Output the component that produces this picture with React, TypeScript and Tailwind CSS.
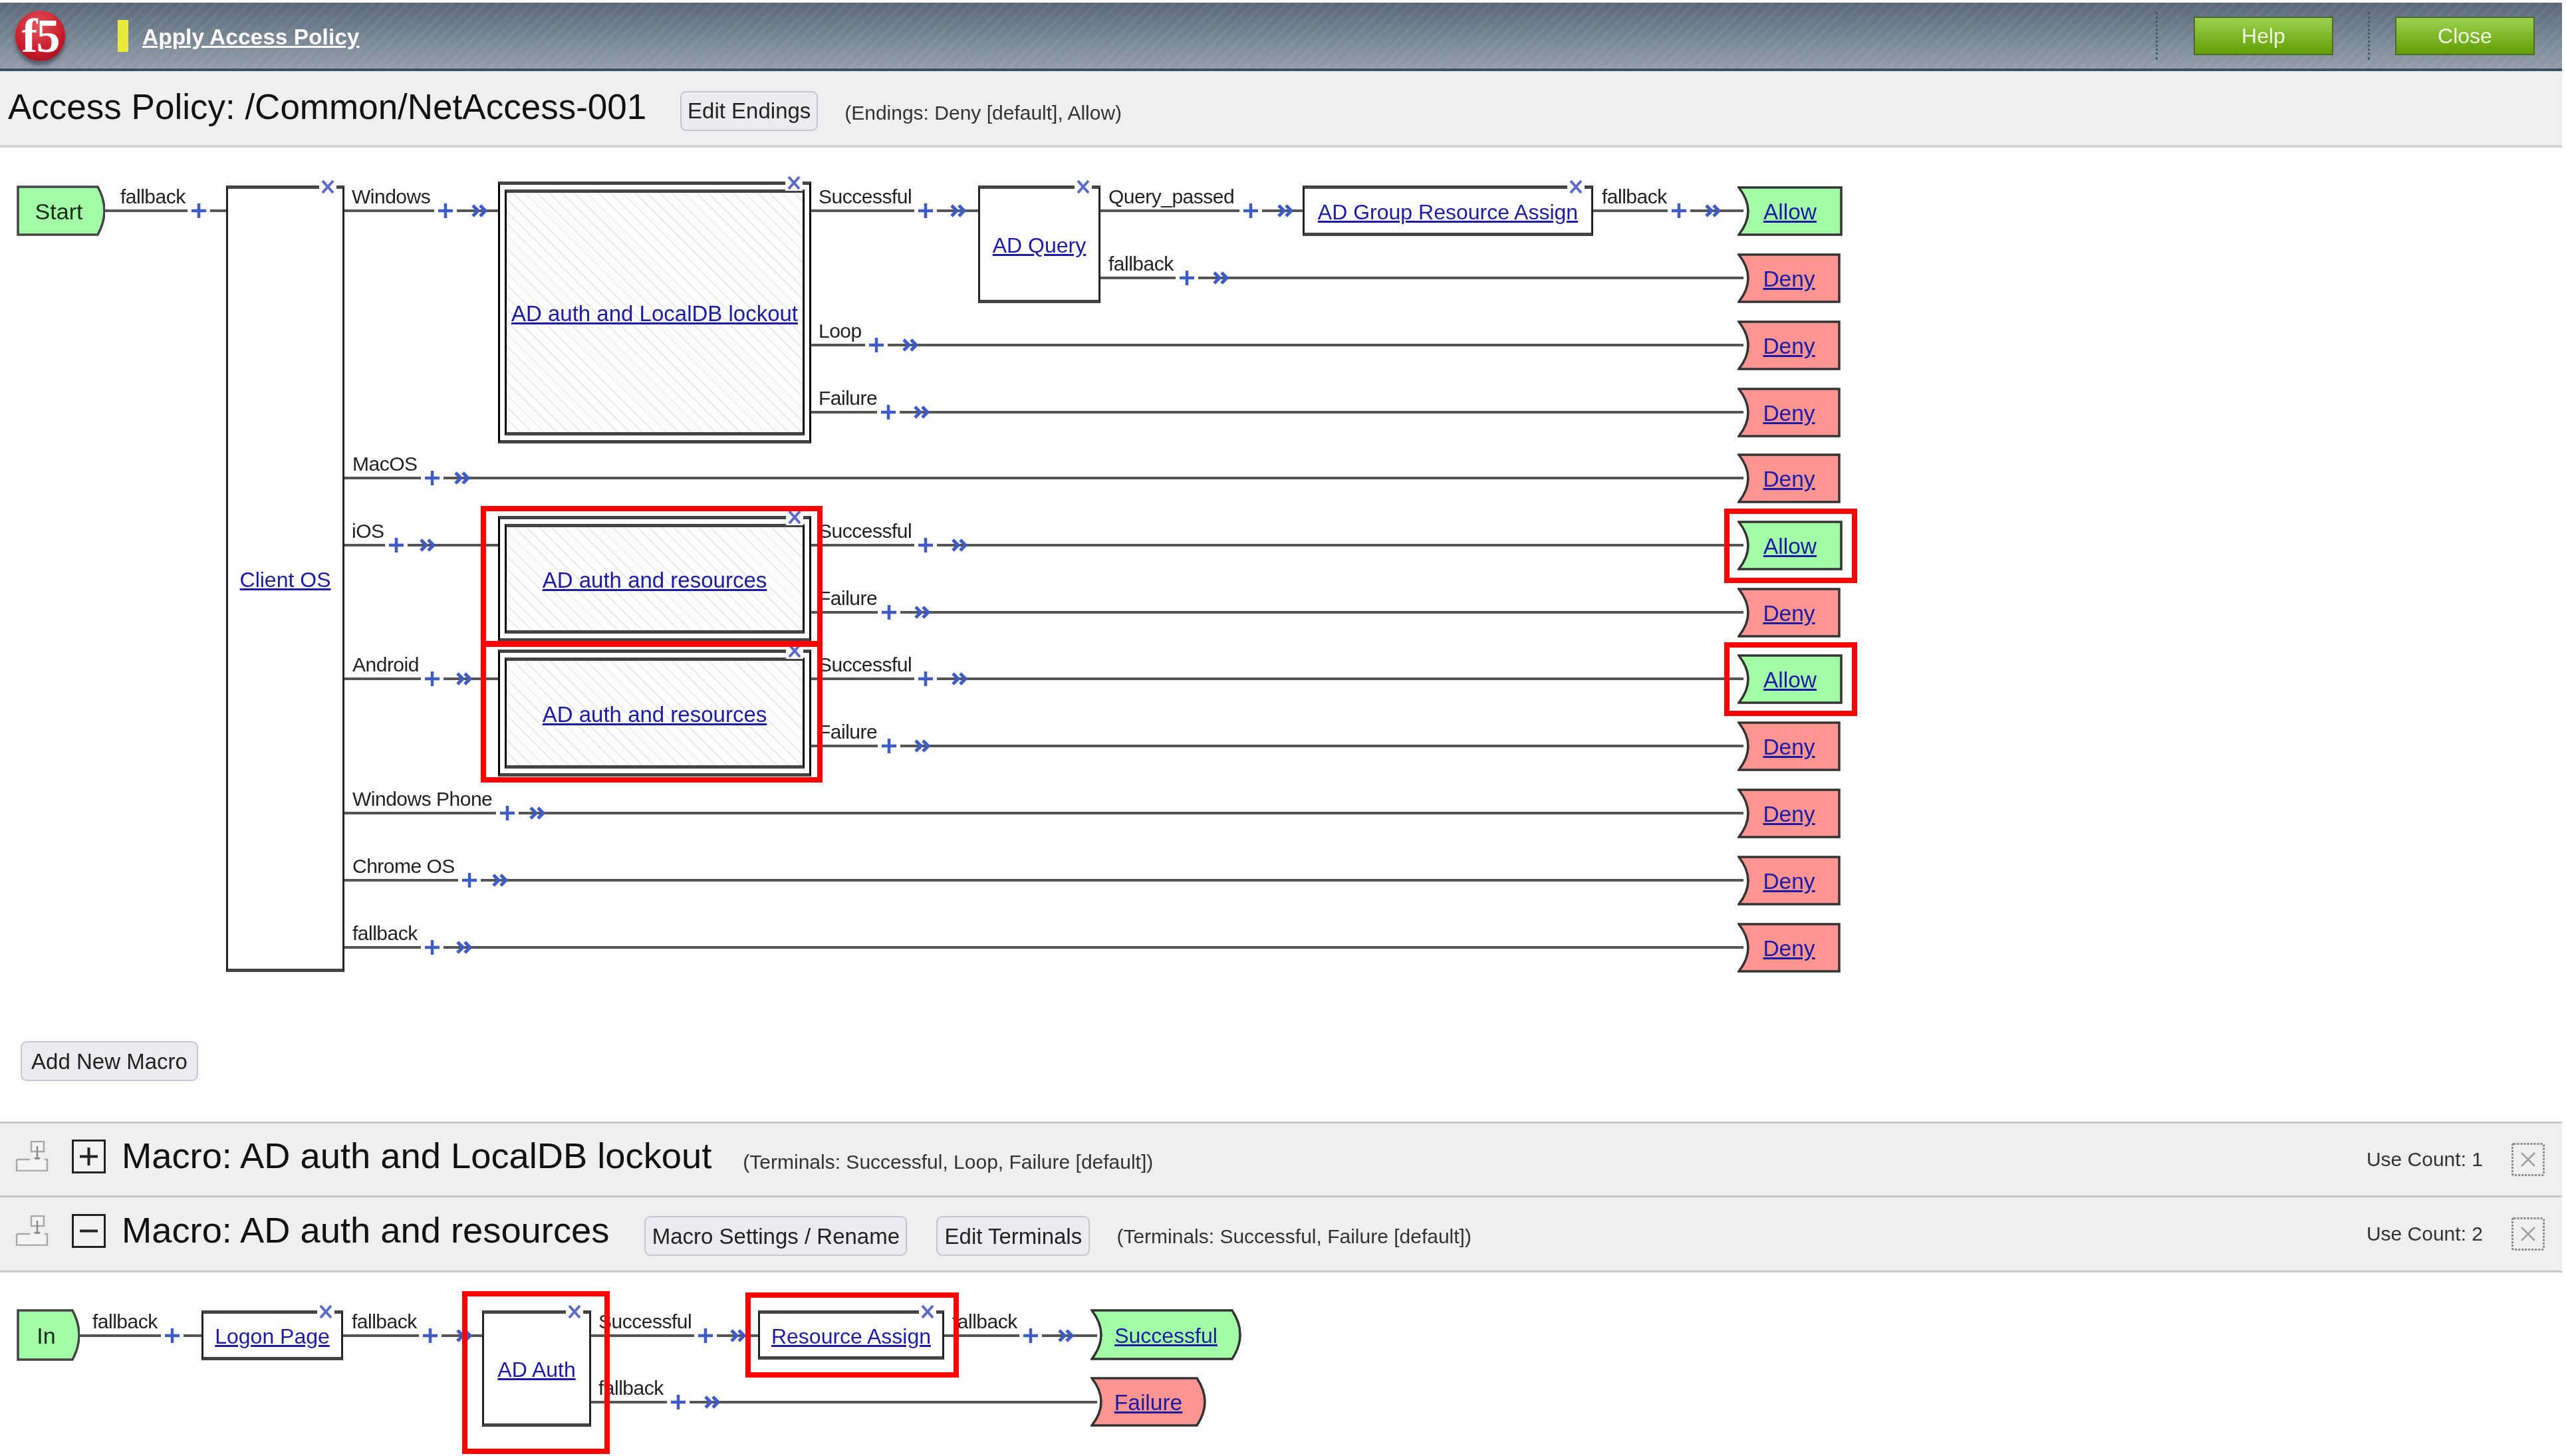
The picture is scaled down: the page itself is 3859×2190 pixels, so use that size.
// App.tsx - Access Policy visual editor (F5 APM)
import type { ReactNode } from 'react';

interface Edge {
  y: number;
  from: number;
  to: number;
  plus: number;
  arrow?: number;
  label: string;
  labelX: number;
}

interface Rect {
  x: number;
  y: number;
  w: number;
  h: number;
}

interface BoxNode extends Rect {
  name: string;
  macro?: boolean;
  closeX: number;
}

interface Ending extends Rect {
  name: string;
  tone: 'green' | 'red';
  notch?: boolean;
  tip?: boolean;
}

const MAIN_TOP = 222;
const LOWER_TOP = 1914;

const DENY_RIGHT = 2622;

const mainEdges: Edge[] = [
  { y: 317, from: 157, to: 340, plus: 299, label: 'fallback', labelX: 181 },
  { y: 317, from: 518, to: 749, plus: 670, arrow: 720, label: 'Windows', labelX: 529 },
  { y: 317, from: 1219, to: 1471, plus: 1392, arrow: 1440, label: 'Successful', labelX: 1231 },
  { y: 317, from: 1655, to: 1959, plus: 1881, arrow: 1932, label: 'Query_passed', labelX: 1667 },
  { y: 317, from: 2396, to: DENY_RIGHT, plus: 2525, arrow: 2575, label: 'fallback', labelX: 2409 },
  { y: 418, from: 1655, to: DENY_RIGHT, plus: 1785, arrow: 1835, label: 'fallback', labelX: 1667 },
  { y: 519, from: 1219, to: DENY_RIGHT, plus: 1318, arrow: 1368, label: 'Loop', labelX: 1231 },
  { y: 620, from: 1219, to: DENY_RIGHT, plus: 1336, arrow: 1385, label: 'Failure', labelX: 1231 },
  { y: 719, from: 518, to: DENY_RIGHT, plus: 650, arrow: 694, label: 'MacOS', labelX: 530 },
  { y: 820, from: 518, to: 749, plus: 596, arrow: 642, label: 'iOS', labelX: 529 },
  { y: 820, from: 1219, to: DENY_RIGHT, plus: 1392, arrow: 1442, label: 'Successful', labelX: 1231 },
  { y: 921, from: 1219, to: DENY_RIGHT, plus: 1337, arrow: 1386, label: 'Failure', labelX: 1231 },
  { y: 1021, from: 518, to: 749, plus: 650, arrow: 697, label: 'Android', labelX: 530 },
  { y: 1021, from: 1219, to: DENY_RIGHT, plus: 1392, arrow: 1442, label: 'Successful', labelX: 1231 },
  { y: 1122, from: 1219, to: DENY_RIGHT, plus: 1337, arrow: 1386, label: 'Failure', labelX: 1231 },
  { y: 1223, from: 518, to: DENY_RIGHT, plus: 763, arrow: 807, label: 'Windows Phone', labelX: 530 },
  { y: 1324, from: 518, to: DENY_RIGHT, plus: 706, arrow: 751, label: 'Chrome OS', labelX: 530 },
  { y: 1425, from: 518, to: DENY_RIGHT, plus: 650, arrow: 697, label: 'fallback', labelX: 530 },
];

const mainBoxes: BoxNode[] = [
  { x: 340, y: 279, w: 178, h: 1183, name: 'Client OS', closeX: 493 },
  { x: 749, y: 273, w: 471, h: 394, name: 'AD auth and LocalDB lockout', macro: true, closeX: 1194 },
  { x: 749, y: 776, w: 471, h: 189, name: 'AD auth and resources', macro: true, closeX: 1195 },
  { x: 749, y: 977, w: 471, h: 191, name: 'AD auth and resources', macro: true, closeX: 1195 },
  { x: 1471, y: 279, w: 184, h: 177, name: 'AD Query', closeX: 1629 },
  { x: 1959, y: 279, w: 437, h: 76, name: 'AD Group Resource Assign', closeX: 2370 },
];

const endingRows: { y: number; tone: 'green' | 'red' }[] = [
  { y: 317, tone: 'green' },
  { y: 418, tone: 'red' },
  { y: 519, tone: 'red' },
  { y: 620, tone: 'red' },
  { y: 719, tone: 'red' },
  { y: 820, tone: 'green' },
  { y: 921, tone: 'red' },
  { y: 1021, tone: 'green' },
  { y: 1122, tone: 'red' },
  { y: 1223, tone: 'red' },
  { y: 1324, tone: 'red' },
  { y: 1425, tone: 'red' },
];

const mainEndings: Ending[] = endingRows.map((row) => ({
  x: 2613,
  y: row.y - 37,
  w: row.tone === 'green' ? 158 : 155,
  h: 75,
  name: row.tone === 'green' ? 'Allow' : 'Deny',
  tone: row.tone,
  notch: true,
}));

const mainHighlights: Rect[] = [
  { x: 723, y: 761, w: 514, h: 211 },
  { x: 723, y: 965, w: 514, h: 212 },
  { x: 2593, y: 765, w: 200, h: 112 },
  { x: 2593, y: 966, w: 200, h: 111 },
];

const lowerEdges: Edge[] = [
  { y: 2009, from: 120, to: 303, plus: 259, label: 'fallback', labelX: 139 },
  { y: 2009, from: 516, to: 725, plus: 647, arrow: 697, label: 'fallback', labelX: 529 },
  { y: 2009, from: 889, to: 1140, plus: 1061, arrow: 1109, label: 'Successful', labelX: 900 },
  { y: 2109, from: 889, to: 1650, plus: 1020, arrow: 1070, label: 'fallback', labelX: 900 },
  { y: 2009, from: 1420, to: 1650, plus: 1550, arrow: 1602, label: 'fallback', labelX: 1432 },
];

const lowerBoxes: BoxNode[] = [
  { x: 303, y: 1971, w: 213, h: 75, name: 'Logon Page', closeX: 490 },
  { x: 725, y: 1971, w: 164, h: 175, name: 'AD Auth', closeX: 864 },
  { x: 1140, y: 1971, w: 280, h: 74, name: 'Resource Assign', closeX: 1395 },
];

const lowerEndings: Ending[] = [
  { x: 1640, y: 1969, w: 227, h: 77, name: 'Successful', tone: 'green', notch: true, tip: true },
  { x: 1640, y: 2071, w: 174, h: 75, name: 'Failure', tone: 'red', notch: true, tip: true },
];

const lowerHighlights: Rect[] = [
  { x: 695, y: 1942, w: 222, h: 245 },
  { x: 1121, y: 1944, w: 321, h: 128 },
];

function NodeLink({ size = 'text-[32px]', children }: { size?: string; children: ReactNode }) {
  return (
    <a className={`${size} mt-[3px] leading-none text-[#1b1ba5] underline whitespace-nowrap`}>{children}</a>
  );
}

function PlusMark({ x, y }: { x: number; y: number }) {
  return (
    <svg
      className="absolute"
      style={{ left: x - 13, top: y - 13 }}
      width="26"
      height="26"
      viewBox="0 0 26 26"
    >
      <path d="M2 13H24M13 2V24" stroke="#3f5cc4" strokeWidth="4.5" fill="none" />
    </svg>
  );
}

function ArrowMark({ x, y }: { x: number; y: number }) {
  return (
    <svg
      className="absolute"
      style={{ left: x - 12, top: y - 10 }}
      width="26"
      height="20"
      viewBox="0 0 26 20"
    >
      <path d="M3 2L11 10L3 18M14 2L22 10L14 18" stroke="#3f5cc4" strokeWidth="5" fill="none" />
    </svg>
  );
}

function CloseMark({ x, y }: { x: number; y: number }) {
  return (
    <svg
      className="absolute bg-white"
      style={{ left: x - 13, top: y - 12 }}
      width="26"
      height="24"
      viewBox="0 0 26 24"
    >
      <path d="M5 3L21 21M21 3L5 21" stroke="#5a6ac8" strokeWidth="4" fill="none" />
    </svg>
  );
}

function EdgeLine({ edge, top }: { edge: Edge; top: number }) {
  const y = edge.y - top;
  const segments = [
    [edge.from, edge.plus - 17],
    [edge.plus + 17, edge.to],
  ];
  return (
    <>
      {segments.map(([a, b]) => (
        <div
          key={a}
          className="absolute h-[4px] bg-[#555555]"
          style={{ left: a, top: y - 2, width: b - a }}
        />
      ))}
      <PlusMark x={edge.plus} y={y} />
      {edge.arrow !== undefined && <ArrowMark x={edge.arrow} y={y} />}
      <span
        className="absolute text-[30px] leading-[30px] tracking-[-0.5px] text-[#222222] whitespace-nowrap"
        style={{ left: edge.labelX, top: y - 36 }}
      >
        {edge.label}
      </span>
    </>
  );
}

function FlowBox({ node, top }: { node: BoxNode; top: number }) {
  const frame = { left: node.x, top: node.y - top, width: node.w, height: node.h };
  return (
    <>
      {node.macro ? (
        <div
          className="absolute p-[7px] bg-white border-x-[3px] border-t-[5px] border-b-[5px] border-x-black border-y-[#444444]"
          style={frame}
        >
          <div className="flex h-full w-full items-center justify-center border-x-[3px] border-y-[5px] border-x-black border-y-[#444444] bg-[image:repeating-linear-gradient(45deg,#ebebeb_0px,#ebebeb_2px,#fdfdfd_2px,#fdfdfd_13px)]">
            <NodeLink size="text-[33px]">{node.name}</NodeLink>
          </div>
        </div>
      ) : (
        <div
          className="absolute flex items-center justify-center bg-white border-x-[3px] border-y-[5px] border-x-[#222222] border-y-[#444444]"
          style={frame}
        >
          <NodeLink>{node.name}</NodeLink>
        </div>
      )}
      <CloseMark x={node.closeX} y={node.y - top + 2} />
    </>
  );
}

function EndingShape({ ending, top }: { ending: Ending; top: number }) {
  const { w, h } = ending;
  const right = ending.tip ? w - 14 : w - 2;
  const d = [
    `M2 2H${right}`,
    ending.tip ? `Q${w + 10} ${h / 2} ${right} ${h - 2}` : `V${h - 2}`,
    `H2`,
    ending.notch ? `Q30 ${h / 2} 2 2Z` : 'Z',
  ].join(' ');
  return (
    <div
      className="absolute flex items-center justify-center"
      style={{ left: ending.x, top: ending.y - top, width: w, height: h }}
    >
      <svg className="absolute inset-0" width={w} height={h} viewBox={`0 0 ${w} ${h}`}>
        <path
          d={d}
          fill={ending.tone === 'green' ? '#a3fda6' : '#fe9590'}
          stroke="#333333"
          strokeWidth="3.5"
        />
      </svg>
      <span className="relative pt-[4px]">
        <NodeLink size={ending.name === 'Successful' ? 'text-[32px]' : 'text-[33.5px]'}>{ending.name}</NodeLink>
      </span>
    </div>
  );
}

function StartShape({ label, x, y, w, h, top }: { label: string; x: number; y: number; w: number; h: number; top: number }) {
  return (
    <div
      className="absolute flex items-center justify-center"
      style={{ left: x, top: y - top, width: w, height: h }}
    >
      <svg className="absolute inset-0" width={w} height={h} viewBox={`0 0 ${w} ${h}`}>
        <path
          d={`M2 2H${w - 11}Q${w + 9} ${h / 2} ${w - 11} ${h - 2}H2Z`}
          fill="#a3fda6"
          stroke="#444444"
          strokeWidth="3.5"
        />
      </svg>
      <span className="relative mt-[2px] pr-[6px] text-[34px] leading-none text-[#1a2a1a]">{label}</span>
    </div>
  );
}

function Highlight({ rect, top }: { rect: Rect; top: number }) {
  return (
    <div
      className="absolute border-[8px] border-[#fe0000]"
      style={{ left: rect.x, top: rect.y - top, width: rect.w, height: rect.h }}
    />
  );
}

function GreyButton({ width, children }: { width: string; children: ReactNode }) {
  return (
    <button
      className={`${width} flex h-[60px] shrink-0 items-center justify-center rounded-[9px] border-2 border-[#c6c6d0] bg-[#ebebf0] text-[33px] leading-none text-[#222222] whitespace-nowrap`}
    >
      {children}
    </button>
  );
}

function MoveIcon() {
  return (
    <svg className="-mt-[10px] shrink-0" width="50" height="46" viewBox="0 0 50 46">
      <rect x="24" y="1" width="19" height="15" fill="#f4f4f4" stroke="#a8a8a8" strokeWidth="2.5" />
      <path d="M33 8V30" stroke="#8a8a8a" strokeWidth="2.5" />
      <path d="M28 25L33 33L38 25Z" fill="#8a8a8a" />
      <path d="M2 28H22M44 28H48V45H2V28" fill="#f4f4f4" stroke="#a8a8a8" strokeWidth="2.5" />
    </svg>
  );
}

function ToggleBox({ open }: { open: boolean }) {
  return (
    <svg className="shrink-0" width="51" height="51" viewBox="0 0 51 51">
      <rect x="1.5" y="1.5" width="48" height="48" fill="#f2f2f2" stroke="#222222" strokeWidth="3" />
      <path d="M12 25.5H39" stroke="#222222" strokeWidth="4" />
      {!open && <path d="M25.5 12V39" stroke="#222222" strokeWidth="4" />}
    </svg>
  );
}

function DeleteBox() {
  return (
    <svg className="shrink-0" width="50" height="50" viewBox="0 0 50 50">
      <rect x="1.5" y="1.5" width="47" height="47" rx="2" fill="#f0f0f0" stroke="#8a8a8a" strokeWidth="3" strokeDasharray="3 2" />
      <path d="M15 15L35 35M35 15L15 35" stroke="#a0a0a0" strokeWidth="2.5" />
    </svg>
  );
}

function MacroRow({
  open,
  title,
  count,
  className,
  children,
}: {
  open: boolean;
  title: string;
  count: number;
  className: string;
  children: ReactNode;
}) {
  return (
    <div className={`${className} flex items-center border-[#c8c8c8] bg-[#efefef] pl-[23px] pr-[26px]`}>
      <MoveIcon />
      <div className="-mt-[10px] ml-[35px]">
        <ToggleBox open={open} />
      </div>
      <h2 className="-mt-[10px] ml-[24px] text-[54.3px] leading-none text-[#111111] whitespace-nowrap">{title}</h2>
      {children}
      <span className="ml-auto text-[30px] leading-none text-[#333333] whitespace-nowrap">Use Count: {count}</span>
      <div className="ml-[43px]">
        <DeleteBox />
      </div>
    </div>
  );
}

export default function App() {
  return (
    <div className="w-[3853px] pt-[4px] bg-white blur-[0.6px] font-['Liberation_Sans',sans-serif]">
      <header className="flex h-[103px] items-center border-b-[4px] border-[#3e4f5f] bg-[image:repeating-linear-gradient(135deg,rgba(255,255,255,0.05)_0px,rgba(255,255,255,0.05)_4px,transparent_4px,transparent_12px),linear-gradient(180deg,#5a6979,#929eaa)]">
        <div className="relative ml-[23px] flex h-[76px] w-[75px] shrink-0 items-center justify-center rounded-full bg-[radial-gradient(circle_at_45%_30%,#e2535a,#c8182a_60%,#8c1018)] shadow-[0_6px_6px_rgba(40,50,60,0.6)]">
          <span className="font-['Liberation_Serif',serif] text-[72px] font-bold leading-none tracking-[-2px] text-white">f5</span>
        </div>
        <div className="ml-[79px] h-[48px] w-[16px] shrink-0 bg-[#eaea3c]" />
        <a className="ml-[21px] mt-[4px] text-[33.5px] font-bold leading-none text-white underline whitespace-nowrap">Apply Access Policy</a>
        <div className="ml-auto h-[72px] border-l-[3px] border-dotted border-[#4a5866]" />
        <button className="ml-[54px] h-[58px] w-[210px] border-2 border-[#4c6a2c] bg-[linear-gradient(180deg,#9cd14e,#629e06)] text-[32px] leading-none text-[#eef6e2]">
          Help
        </button>
        <div className="ml-[52px] h-[72px] border-l-[3px] border-dotted border-[#4a5866]" />
        <button className="ml-[38px] mr-[41px] h-[58px] w-[210px] border-2 border-[#4c6a2c] bg-[linear-gradient(180deg,#9cd14e,#629e06)] text-[32px] leading-none text-[#eef6e2]">
          Close
        </button>
      </header>

      <section className="flex h-[115px] items-center border-b-[4px] border-[#d4d4d4] bg-[#efefef] pl-[12px]">
        <h1 className="-mt-[4px] text-[53px] leading-none text-[#111111] whitespace-nowrap">Access Policy: /Common/NetAccess-001</h1>
        <div className="ml-[51px] mt-[8px]">
          <GreyButton width="w-[207px]">Edit Endings</GreyButton>
        </div>
        <span className="ml-[40px] mt-[14px] text-[30px] leading-none text-[#333333] whitespace-nowrap">(Endings: Deny [default], Allow)</span>
      </section>

      <main className="relative h-[1344px] bg-white">
        {mainEdges.map((edge) => (
          <EdgeLine key={`${edge.y}-${edge.from}`} edge={edge} top={MAIN_TOP} />
        ))}
        <StartShape label="Start" x={25} y={279} w={133} h={76} top={MAIN_TOP} />
        {mainBoxes.map((node) => (
          <FlowBox key={`${node.x}-${node.y}`} node={node} top={MAIN_TOP} />
        ))}
        {mainEndings.map((ending) => (
          <EndingShape key={ending.y} ending={ending} top={MAIN_TOP} />
        ))}
        {mainHighlights.map((rect) => (
          <Highlight key={`${rect.x}-${rect.y}`} rect={rect} top={MAIN_TOP} />
        ))}
      </main>

      <div className="bg-white pb-[61px] pl-[31px]">
        <GreyButton width="w-[267px]">Add New Macro</GreyButton>
      </div>

      <MacroRow open={false} title="Macro: AD auth and LocalDB lockout" count={1} className="h-[111px] border-t-[3px]">
        <span className="ml-[47px] mt-[8px] text-[30px] leading-none text-[#333333] whitespace-nowrap">
          (Terminals: Successful, Loop, Failure [default])
        </span>
      </MacroRow>
      <MacroRow open title="Macro: AD auth and resources" count={2} className="h-[116px] border-y-[3px]">
        <div className="ml-[53px] mt-[6px]">
          <GreyButton width="w-[395px]">Macro Settings / Rename</GreyButton>
        </div>
        <div className="ml-[44px] mt-[6px]">
          <GreyButton width="w-[231px]">Edit Terminals</GreyButton>
        </div>
        <span className="ml-[40px] mt-[8px] text-[30px] leading-none text-[#333333] whitespace-nowrap">
          (Terminals: Successful, Failure [default])
        </span>
      </MacroRow>

      <section className="relative h-[276px] bg-white">
        {lowerEdges.map((edge) => (
          <EdgeLine key={`${edge.y}-${edge.from}`} edge={edge} top={LOWER_TOP} />
        ))}
        <StartShape label="In" x={25} y={1969} w={95} h={78} top={LOWER_TOP} />
        {lowerBoxes.map((node) => (
          <FlowBox key={node.x} node={node} top={LOWER_TOP} />
        ))}
        {lowerEndings.map((ending) => (
          <EndingShape key={ending.y} ending={ending} top={LOWER_TOP} />
        ))}
        {lowerHighlights.map((rect) => (
          <Highlight key={rect.x} rect={rect} top={LOWER_TOP} />
        ))}
      </section>
    </div>
  );
}
